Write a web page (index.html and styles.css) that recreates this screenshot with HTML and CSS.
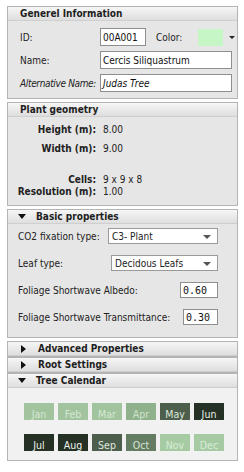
FILE: index.html
```html
<!DOCTYPE html>
<html lang="en">
<head>
    <meta charset="UTF-8">
    <title>Plant Properties</title>
    <link rel="stylesheet" href="styles.css">
</head>
<body>
    <div class="panel">
        <!-- Generel Information -->
        <div class="section">
            <div class="header">Generel Information</div>
            <div class="body info">
                <div class="row">
                    <span class="label">ID:</span>
                    <span class="field id-field">00A001</span>
                    <span class="color-label">Color:</span>
                    <span class="swatch"></span>
                    <span class="mini-arrow"></span>
                </div>
                <div class="row">
                    <span class="label">Name:</span>
                    <span class="field wide">Cercis Siliquastrum</span>
                </div>
                <div class="row">
                    <span class="label italic squeeze">Alternative Name:</span>
                    <span class="field wide italic">Judas Tree</span>
                </div>
            </div>
        </div>

        <!-- Plant geometry -->
        <div class="section spaced">
            <div class="header">Plant geometry</div>
            <div class="body geometry">
                <div class="geo-row"><b>Height (m):</b><span>8.00</span></div>
                <div class="geo-row"><b>Width (m):</b><span>9.00</span></div>
                <div class="geo-row tight first"><b>Cells:</b><span>9 x 9 x 8</span></div>
                <div class="geo-row tight"><b>Resolution (m):</b><span>1.00</span></div>
            </div>
        </div>

        <!-- Basic properties -->
        <div class="section spaced">
            <div class="header"><span class="tri down"></span>Basic properties</div>
            <div class="body basic">
                <div class="prop-row">
                    <span>CO2 fixation type:</span>
                    <span class="select co2">C3- Plant<span class="sel-arrow"></span></span>
                </div>
                <div class="prop-row">
                    <span>Leaf type:</span>
                    <span class="select leaf">Decidous Leafs<span class="sel-arrow"></span></span>
                </div>
                <div class="prop-row">
                    <span>Foliage Shortwave Albedo:</span>
                    <span class="field num albedo">0.60</span>
                </div>
                <div class="prop-row">
                    <span>Foliage Shortwave Transmittance:</span>
                    <span class="field num trans">0.30</span>
                </div>
            </div>
        </div>

        <div class="section spaced">
            <div class="header"><span class="tri right"></span>Advanced Properties</div>
        </div>
        <div class="section">
            <div class="header"><span class="tri right"></span>Root Settings</div>
        </div>

        <!-- Tree Calendar -->
        <div class="section">
            <div class="header"><span class="tri down"></span>Tree Calendar</div>
            <div class="body calendar">
                <div class="month m-light">Jan</div>
                <div class="month m-light">Feb</div>
                <div class="month m-light">Mar</div>
                <div class="month m-mid">Apr</div>
                <div class="month m-dim">May</div>
                <div class="month m-dark">Jun</div>
                <div class="month m-dark">Jul</div>
                <div class="month m-dark">Aug</div>
                <div class="month m-dim">Sep</div>
                <div class="month m-olive">Oct</div>
                <div class="month m-pale">Nov</div>
                <div class="month m-pale">Dec</div>
            </div>
        </div>
    </div>
</body>
</html>
```

FILE: styles.css
```css
* {
    box-sizing: border-box;
}

body {
    margin: 0;
    padding: 6px 0 0 7px;
    background-color: #fff;
    font-family: "DejaVu Sans Condensed", "DejaVu Sans", sans-serif;
    font-size: 10px;
    color: #222;
}

.panel {
    width: 231px;
    display: flex;
    flex-direction: column;
}

.section {
    border: 1px solid #b4b4b4;
    background-color: #e6e6e6;
}

.section.spaced {
    margin-top: 3px;
}

.header {
    height: 14px;
    display: flex;
    align-items: center;
    padding-left: 12px;
    font-weight: bold;
    font-size: 10px;
    color: #1e1e1e;
    background: linear-gradient(#f6f6f6, #dedede);
    border-bottom: 1px solid #cfcfcf;
}

.tri {
    width: 0;
    height: 0;
    margin: 0 10px 0 -2px;
}

.tri.down {
    border-left: 4px solid transparent;
    border-right: 4px solid transparent;
    border-top: 5px solid #111;
}

.tri.right {
    border-top: 4px solid transparent;
    border-bottom: 4px solid transparent;
    border-left: 5px solid #111;
    margin-left: 1px;
    margin-right: 12px;
}

/* generel information */
.info {
    padding: 7px 0 6px 12px;
    display: flex;
    flex-direction: column;
    gap: 5px;
}

.row {
    display: flex;
    align-items: center;
    height: 18px;
}

.label {
    width: 80px;
    flex: none;
    white-space: nowrap;
}

.squeeze {
    letter-spacing: -0.35px;
}

.italic {
    font-style: italic;
}

.field {
    height: 18px;
    background: #fff;
    border: 1px solid #8e8e8e;
    display: flex;
    align-items: center;
    padding-left: 2px;
    color: #111;
}

.id-field {
    width: 46px;
}

.wide {
    width: 132px;
}

.color-label {
    margin-left: 10px;
    width: 42px;
}

.swatch {
    width: 25px;
    height: 17px;
    background: #c6f5c6;
}

.mini-arrow {
    margin-left: 6px;
    border-left: 3px solid transparent;
    border-right: 3px solid transparent;
    border-top: 3px solid #222;
}

/* plant geometry */
.geometry {
    padding: 6px 0 7px;
}

.geo-row {
    display: grid;
    grid-template-columns: 88px 1fr;
    column-gap: 7px;
    line-height: 14px;
    margin-bottom: 5px;
}

.geo-row b {
    text-align: right;
}

.geo-row.tight {
    line-height: 12px;
    margin-bottom: 0;
}

.geo-row.first {
    margin-top: 18px;
}

/* basic properties */
.basic {
    padding: 4px 0 12px 10px;
    display: flex;
    flex-direction: column;
    gap: 11px;
}

.prop-row {
    display: flex;
    align-items: center;
    justify-content: space-between;
    height: 16px;
    padding-right: 19px;
}

.select {
    height: 16px;
    background: #fff;
    border: 1px solid #9a9a9a;
    display: flex;
    align-items: center;
    padding-left: 3px;
    position: relative;
}

.co2 {
    width: 110px;
}

.leaf {
    width: 107px;
}

.sel-arrow {
    position: absolute;
    right: 6px;
    top: 6px;
    border-left: 4px solid transparent;
    border-right: 4px solid transparent;
    border-top: 4px solid #555;
}

.num {
    height: 16px;
    font-family: "DejaVu Sans Mono", monospace;
    font-size: 10px;
}

.albedo {
    width: 38px;
}

.trans {
    width: 35px;
}

/* tree calendar */
.calendar {
    background-color: #f1f1f1;
    padding: 15px 0 9px 16px;
    display: grid;
    grid-template-columns: repeat(6, 30px);
    column-gap: 4px;
    row-gap: 14px;
}

.month {
    height: 17px;
    display: flex;
    align-items: flex-end;
    justify-content: center;
    font-size: 10.5px;
    line-height: 12px;
}

.m-light {
    background: #a1c49e;
    color: #d6e8d4;
}

.m-pale {
    background: #a6cba3;
    color: #d9ecd7;
}

.m-mid {
    background: #8fb18b;
    color: #cfe2cc;
}

.m-olive {
    background: #637c62;
    color: #d7e4d6;
}

.m-dim {
    background: #4d5f4c;
    color: #dfe8de;
}

.m-dark {
    background: #253124;
    color: #f0f4ef;
}
```
